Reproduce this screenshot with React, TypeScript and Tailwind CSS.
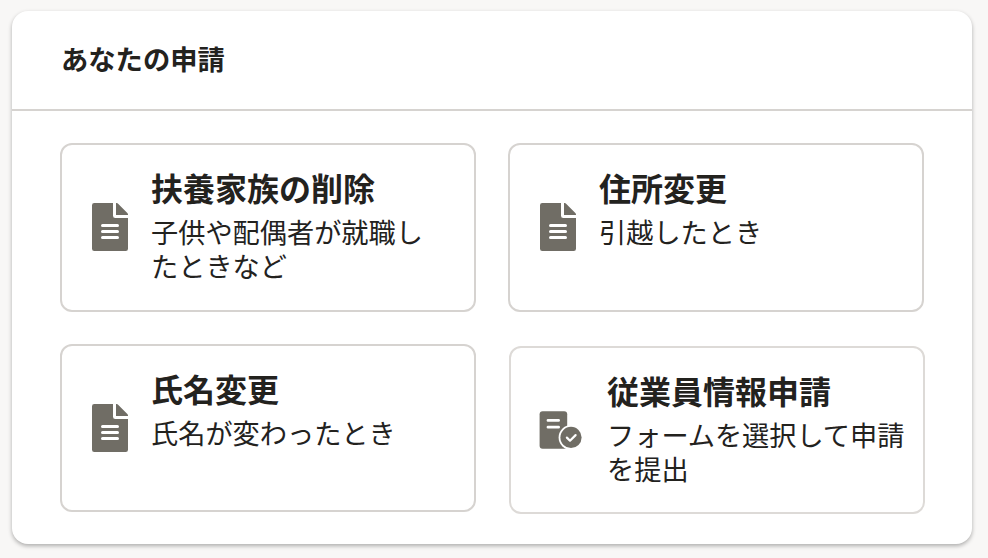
type IconKind = 'file' | 'form';

interface RequestItem {
  title: string;
  description: string;
  icon: IconKind;
}

const items: RequestItem[] = [
  { title: '扶養家族の削除', description: '子供や配偶者が就職したときなど', icon: 'file' },
  { title: '住所変更', description: '引越したとき', icon: 'file' },
  { title: '氏名変更', description: '氏名が変わったとき', icon: 'file' },
  { title: '従業員情報申請', description: 'フォームを選択して申請を提出', icon: 'form' },
];

function FileIcon() {
  return (
    <svg width="36" height="48" viewBox="0 0 36 48" className="mt-[58px] shrink-0" fill="#706d65" aria-hidden="true">
      <path d="M2.25 0H21v12.75A2.25 2.25 0 0 0 23.25 15H36v30.75A2.25 2.25 0 0 1 33.75 48H2.25A2.25 2.25 0 0 1 0 45.75V2.25A2.25 2.25 0 0 1 2.25 0Z" />
      <path d="M24 0h.6c.6 0 1.1.24 1.5.66l9.24 9.24c.42.4.66.95.66 1.5V12H24Z" />
      <path d="M10.5 22.5h15M10.5 28.5h15M10.5 34.5h15" stroke="#fff" strokeWidth="3" strokeLinecap="round" />
    </svg>
  );
}

function FormIcon() {
  return (
    <svg width="43" height="38" viewBox="0 0 43 38" className="mt-[63px] shrink-0" fill="#706d65" aria-hidden="true">
      <rect x="0.6" y="0.3" width="27.6" height="37.4" rx="3" />
      <path d="M9 9.4h10.6M9 16.2h10.6" stroke="#fff" strokeWidth="2.8" strokeLinecap="round" />
      <circle cx="32" cy="26.4" r="12.4" fill="#fff" />
      <circle cx="32" cy="26.4" r="10.6" />
      <path d="m27.9 26.6 3.1 3.1 5.6-5.6" fill="none" stroke="#fff" strokeWidth="2.2" strokeLinecap="round" strokeLinejoin="round" />
    </svg>
  );
}

function RequestCard({ item }: { item: RequestItem }) {
  const isForm = item.icon === 'form';
  return (
    <button
      type="button"
      className={
        isForm
          ? 'mt-[2px] ml-px flex h-[168px] w-[416px] items-start gap-[25px] rounded-xl border-2 border-[#dddad7] bg-white pr-2 pl-[28px] text-left'
          : 'flex h-full w-[416px] items-start gap-[23px] rounded-xl border-2 border-[#d6d3d0] bg-white pr-7 pl-[30px] text-left'
      }
    >
      {isForm ? <FormIcon /> : <FileIcon />}
      <span className="mt-[22px] flex min-w-0 flex-1 flex-col">
        <span className="text-[32px] leading-[40px] font-bold">{item.title}</span>
        <span className="mt-[7px] text-[27.2px] leading-[34px]">{item.description}</span>
      </span>
    </button>
  );
}

export default function App() {
  return (
    <main className="h-[558px] w-[988px] overflow-hidden bg-[#f8f7f6] px-3 pt-[11px] font-['Noto_Sans_CJK_JP',sans-serif] text-[#23221e]">
      <section className="h-[533px] w-[960px] rounded-2xl bg-white shadow-[0_2px_4px_rgba(3,3,2,0.3)]">
        <header className="flex h-[100px] items-center border-b-2 border-[#d6d3d0] px-[49px] pb-1">
          <h2 className="text-[27.3px] leading-[34px] font-bold">あなたの申請</h2>
        </header>
        <div className="grid grid-cols-[416px_416px] grid-rows-[169px_168px] gap-8 px-12 pt-8">
          {items.map((item) => (
            <RequestCard key={item.title} item={item} />
          ))}
        </div>
      </section>
    </main>
  );
}
